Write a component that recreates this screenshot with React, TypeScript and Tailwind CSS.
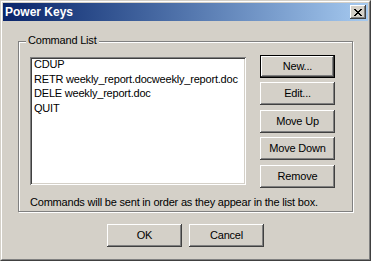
const raised =
  "shadow-[inset_-1px_-1px_#404040,inset_1px_1px_#ffffff,inset_-2px_-2px_#808080,inset_2px_2px_#d4d0c8]";

function Btn({ label, isDefault, className = "" }: { label: string; isDefault?: boolean; className?: string }) {
  if (isDefault) {
    return (
      <div className={`w-[75px] h-[23px] border border-black ${className}`}>
        <button className="w-full h-full bg-[#d4d0c8] shadow-[inset_-1px_-1px_#404040,inset_1px_1px_#ffffff,inset_-2px_-2px_#808080] flex items-center justify-center">
          {label}
        </button>
      </div>
    );
  }
  return (
    <button className={`w-[75px] h-[23px] bg-[#d4d0c8] ${raised} flex items-center justify-center ${className}`}>
      {label}
    </button>
  );
}

const commands = ["CDUP", "RETR weekly_report.docweekly_report.doc", "DELE weekly_report.doc", "QUIT"];

export default function App() {
  return (
    <div
      className="w-[371px] h-[261px] bg-[#d4d0c8] border border-t-[#d4d0c8] border-l-[#d4d0c8] border-r-[#404040] border-b-[#404040] text-[11px] tracking-[-0.2px] text-black"
      style={{ fontFamily: '"Liberation Sans", Arial, sans-serif' }}
    >
      <div className="w-full h-full border border-t-white border-l-white border-r-[#808080] border-b-[#808080] p-px flex flex-col">
        {/* Title bar */}
        <div className="h-[18px] flex items-center justify-between bg-gradient-to-r from-[#0a246a] to-[#a6caf0] pl-[2px] pr-[2px]">
          <span className="text-white font-bold text-[12px] tracking-normal leading-none">Power Keys</span>
          <button className={`w-[16px] h-[14px] bg-[#d4d0c8] ${raised} flex items-center justify-center`}>
            <svg width="8" height="7" viewBox="0 0 8 7" shapeRendering="crispEdges">
              <path d="M0 0h2v1h-2zM6 0h2v1h-2zM1 1h2v1h-2zM5 1h2v1h-2zM2 2h4v1h-4zM3 3h2v1h-2zM2 4h4v1h-4zM1 5h2v1h-2zM5 5h2v1h-2zM0 6h2v1h-2zM6 6h2v1h-2z" fill="#000" />
            </svg>
          </button>
        </div>

        {/* Body */}
        <div className="flex-1 flex flex-col px-[15px] pt-[20px]">
          <div className="relative border border-[#808080] shadow-[inset_1px_1px_#ffffff,1px_1px_#ffffff] w-[335px] h-[171px] pl-[11px] pt-[13px]">
            <span className="absolute left-[7px] top-[-8px] px-[2px] bg-[#d4d0c8] leading-[13px]">Command List</span>
            <div className="flex items-start">
              <div className="mt-[2px] w-[216px] h-[128px] bg-white shadow-[inset_1px_1px_#808080,inset_-1px_-1px_#ffffff,inset_2px_2px_#404040,inset_-2px_-2px_#d4d0c8] pl-[4px] pt-0 leading-[14.5px]">
                {commands.map((c) => (
                  <div key={c} className="whitespace-nowrap overflow-hidden">{c}</div>
                ))}
              </div>
              <div className="ml-[14px] flex flex-col">
                <Btn label="New..." isDefault />
                <Btn label="Edit..." className="mt-[4px]" />
                <Btn label="Move Up" className="mt-[5px]" />
                <Btn label="Move Down" className="mt-[4px]" />
                <Btn label="Remove" className="mt-[5px]" />
              </div>
            </div>
            <div className="mt-[8px] leading-[13px]">Commands will be sent in order as they appear in the list box.</div>
          </div>

          <div className="flex justify-center gap-[7px] mt-[12px]">
            <Btn label="OK" />
            <Btn label="Cancel" />
          </div>
        </div>
      </div>
    </div>
  );
}
